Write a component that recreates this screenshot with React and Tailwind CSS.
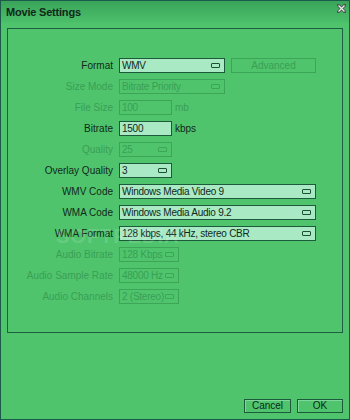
import React from 'react';

const font = "font-['Liberation_Sans',Arial,sans-serif]";

const Caret = ({ off }) => (
  <span
    className={`ml-auto mr-[4px] shrink-0 w-[9px] h-[5px] rounded-[1px] border ${off ? 'border-[#3da558]' : 'border-[#1d4f34]'}`}
  />
);

const Field = ({ value, width, off, drop }) => (
  <div
    className={`h-[15px] flex items-center pl-[2px] border text-[10px] tracking-[-0.25px] leading-none ${width} ${
      off
        ? 'border-[#3da558] text-[#3a9f55] bg-transparent'
        : 'border-[#1d5a3c] text-[#0f2a1a] bg-[#a9e9c4]'
    }`}
  >
    <span className="whitespace-nowrap">{value}</span>
    {drop && <Caret off={off} />}
  </div>
);

const Row = ({ label, off, children }) => (
  <div className="flex items-center h-[15px]">
    <div
      className={`w-[106px] pr-[1px] text-right text-[10px] leading-none whitespace-nowrap ${
        off ? 'text-[#3a9f55]' : 'text-[#0f2a1a]'
      }`}
    >
      {label}
    </div>
    <div className="ml-[5px] flex items-center gap-[3px]">{children}</div>
  </div>
);

export default function App() {
  return (
    <div className={`w-[350px] h-[420px] bg-[#4fc46d] border border-[#1b5a48] flex flex-col relative ${font}`}>
      {/* Title bar */}
      <div className="h-[22px] flex items-center justify-between pl-[5px] pr-[3px] bg-gradient-to-b from-[#3aa45a] to-[#4cc06b]">
        <span className="text-[11px] font-bold text-[#10281a] tracking-[-0.2px]">Movie Settings</span>
        <svg width="9" height="9" viewBox="0 0 9 9" className="mb-[7px]">
          <path d="M1 1 L8 8 M8 1 L1 8" stroke="#4a5550" strokeWidth="3" strokeLinecap="square" />
          <path d="M1.5 1.5 L7.5 7.5 M7.5 1.5 L1.5 7.5" stroke="#e8ece9" strokeWidth="1.3" />
        </svg>
      </div>

      {/* Panel */}
      <div className="mx-[6px] mt-[5px] h-[305px] border border-[#1d5e44] pt-[29px] flex flex-col gap-[6px]">
        <Row label="Format">
          <Field value="WMV" width="w-[106px]" drop />
          <div className="ml-[3px] w-[85px] h-[15px] border border-[#3da558] text-[#3a9f55] text-[10px] leading-none flex items-center justify-center">
            Advanced
          </div>
        </Row>
        <Row label="Size Mode" off>
          <Field value="Bitrate Priority" width="w-[106px]" off drop />
        </Row>
        <Row label="File Size" off>
          <Field value="100" width="w-[53px]" off />
          <span className="text-[10px] text-[#3a9f55]">mb</span>
        </Row>
        <Row label="Bitrate">
          <Field value="1500" width="w-[53px]" />
          <span className="text-[10px] text-[#0f2a1a]">kbps</span>
        </Row>
        <Row label="Quality" off>
          <Field value="25" width="w-[53px]" off drop />
        </Row>
        <Row label="Overlay Quality">
          <Field value="3" width="w-[53px]" drop />
        </Row>
        <Row label="WMV Code">
          <Field value="Windows Media Video 9" width="w-[197px]" drop />
        </Row>
        <Row label="WMA Code">
          <Field value="Windows Media Audio 9.2" width="w-[197px]" drop />
        </Row>
        <Row label="WMA Format">
          <Field value="128 kbps, 44 kHz, stereo CBR" width="w-[197px]" drop />
        </Row>
        <Row label="Audio Bitrate" off>
          <Field value="128 Kbps" width="w-[60px]" off drop />
        </Row>
        <Row label="Audio Sample Rate" off>
          <Field value="48000 Hz" width="w-[60px]" off drop />
        </Row>
        <Row label="Audio Channels" off>
          <Field value="2 (Stereo)" width="w-[60px]" off drop />
        </Row>
      </div>

      {/* Footer */}
      <div className="mt-auto mb-[6px] mr-[6px] flex justify-end gap-[6px]">
        <button className="w-[47px] h-[14px] border border-[#1d5a3c] shadow-[inset_1px_1px_0_#7ed89a] text-[10px] leading-none text-[#10281a]">
          Cancel
        </button>
        <button className="w-[46px] h-[14px] border border-[#1d5a3c] shadow-[inset_1px_1px_0_#7ed89a] text-[10px] leading-none text-[#10281a]">
          OK
        </button>
      </div>

      {/* Watermark */}
      <span className="absolute left-[55px] top-[220px] text-[20px] font-bold tracking-[1px] text-white/15 pointer-events-none">
        SOFTPEDIA
      </span>
    </div>
  );
}
